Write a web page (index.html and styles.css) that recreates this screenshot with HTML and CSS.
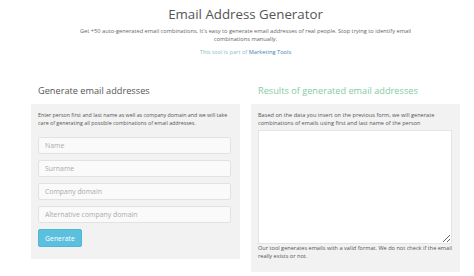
FILE: index.html
```html
<!DOCTYPE html>
<html lang="en">
<head>
    <meta charset="UTF-8">
    <meta name="viewport" content="width=device-width, initial-scale=1.0">
    <title>Email Address Generator</title>
    <link rel="stylesheet" href="styles.css">
</head>
<body>
    <div class="page">
        <div class="intro">
            <h1>Email Address Generator</h1>
            <p class="lead">Get +50 auto-generated email combinations. It's easy to generate email addresses of real people. Stop trying to identify email combinations manually.</p>
            <p class="part">This tool is part of <a href="#">Marketing Tools</a></p>
        </div>
        <div class="columns">
            <div class="col">
                <h2>Generate email addresses</h2>
                <div class="box">
                    <p class="small">Enter person first and last name as well as company domain and we will take care of generating all possible combinations of email addresses.</p>
                    <input type="text" placeholder="Name">
                    <input type="text" placeholder="Surname">
                    <input type="text" placeholder="Company domain">
                    <input type="text" placeholder="Alternative company domain">
                    <button class="btn">Generate</button>
                </div>
            </div>
            <div class="col">
                <h2 class="green">Results of generated email addresses</h2>
                <div class="box box-result">
                    <p>Based on the data you insert on the previous form, we will generate combinations of emails using first and last name of the person</p>
                    <textarea></textarea>
                    <p class="note">Our tool generates emails with a valid format. We do not check if the email really exists or not.</p>
                </div>
            </div>
        </div>
    </div>
</body>
</html>
```

FILE: styles.css
```css
body {
    margin: 0;
    font-family: "Open Sans", "DejaVu Sans", sans-serif;
    color: #555;
    background: #fff;
}
.page {
    width: 429px;
    margin-left: 31px;
}
.intro {
    text-align: center;
}
.intro h1 {
    margin: 0;
    padding-top: 5px;
    font-size: 13.3px;
    font-weight: 400;
    line-height: 19px;
    color: #555;
}
.intro .lead {
    margin: 3px auto 0;
    width: 340px;
    font-size: 5.7px;
    line-height: 8px;
    color: #666;
}
.intro .part {
    margin: 5px 0 0;
    font-size: 5.7px;
    line-height: 8px;
    color: #7cc4c4;
}
.intro .part a {
    color: #3f7fb5;
    text-decoration: none;
}
.columns {
    display: flex;
    gap: 11px;
    margin-top: 28px;
}
.col {
    width: 209px;
}
.col h2 {
    margin: 0 0 6px;
    padding-left: 7px;
    font-size: 9.2px;
    font-weight: 400;
    line-height: 14px;
    color: #555;
}
.col h2.green {
    color: #7fcca6;
}
.box {
    background: #f2f2f2;
    padding: 7px 7px 12px;
    display: flex;
    flex-direction: column;
}
.box p {
    margin: 0 0 8px;
    font-size: 5.6px;
    line-height: 8px;
    color: #555;
}
.box p.small {
    font-size: 5.3px;
    margin-bottom: 10px;
}
.box input {
    box-sizing: border-box;
    height: 17px;
    margin: 0 2px 6px 0;
    padding: 0 6px;
    border: 1px solid #e2e2e2;
    border-radius: 2px;
    background: #fafafa;
    font-family: inherit;
    font-size: 6.9px;
    color: #555;
}
.box input::placeholder {
    color: #aaa;
}
.btn {
    align-self: flex-start;
    height: 18px;
    padding: 0 6px;
    border: 1px solid #4fb6d6;
    border-radius: 2px;
    background: #5bc0de;
    color: #fff;
    font-family: inherit;
    font-size: 6.9px;
}
.box-result {
    padding-bottom: 12px;
}
.box-result p {
    margin-bottom: 3px;
}
.box-result textarea {
    box-sizing: border-box;
    height: 114px;
    margin: 0 1px 0 0;
    border: 1px solid #e4e4e4;
    background: #fff;
    resize: vertical;
}
.box-result .note {
    margin: 0;
}
```
